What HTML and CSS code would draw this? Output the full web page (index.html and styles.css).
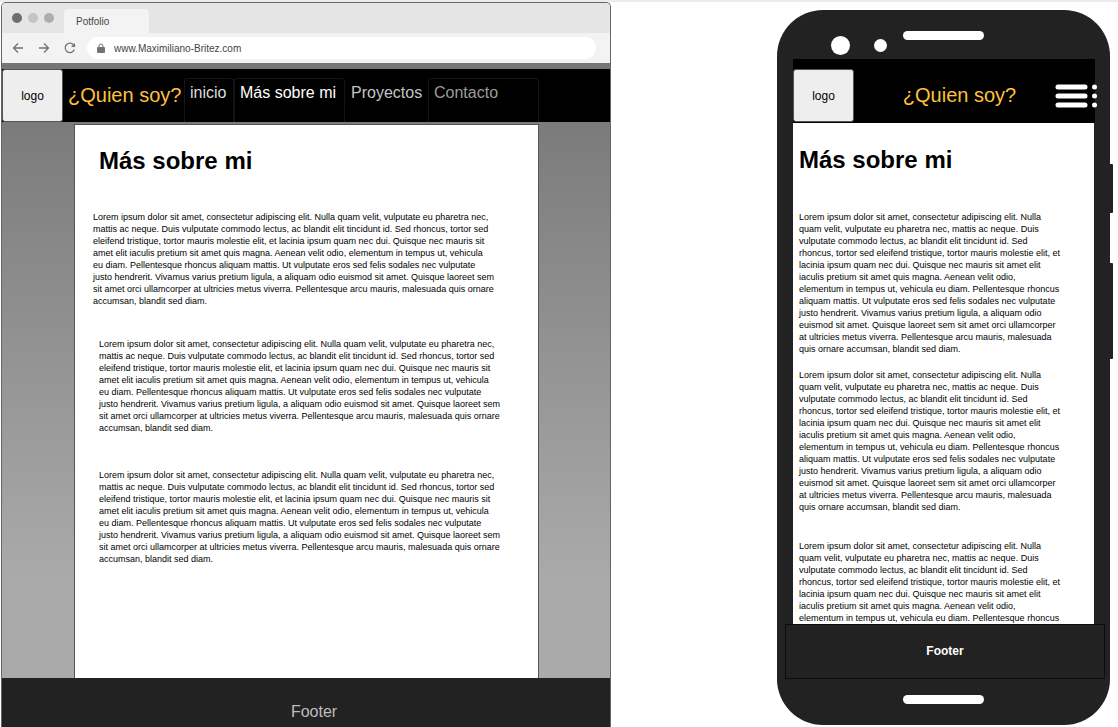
FILE: index.html
```html
<!DOCTYPE html>
<html lang="es">
<head>
<meta charset="utf-8">
<meta name="viewport" content="width=device-width, initial-scale=1">
<title>Potfolio</title>
<link rel="stylesheet" href="styles.css">
</head>
<body>
<div class="board">
  <section class="browser" aria-label="Vista de escritorio">
    <div class="tabstrip">
      <span class="light light-dark"></span>
      <span class="light light-pale"></span>
      <span class="light light-mid"></span>
      <button class="tab" type="button">Potfolio</button>
    </div>
    <div class="toolbar">
      <button class="tool" type="button" aria-label="Atrás"><svg viewBox="0 0 12 12"><path d="M11 6H1.500M6 1.500 1.500 6 6 10.500"/></svg></button>
      <button class="tool" type="button" aria-label="Adelante"><svg viewBox="0 0 12 12"><path d="M1 6h9.500M6 1.500 10.500 6 6 10.500"/></svg></button>
      <button class="tool" type="button" aria-label="Recargar"><svg viewBox="0 0 12 12"><path d="M10.300 7.500A4.700 4.700 0 1 1 9.600 2.900L11 4.500"/><path d="M11 1v4H7z" class="solid"/></svg></button>
      <label class="address">
        <svg class="lock" viewBox="0 0 8 11" aria-hidden="true"><path d="M2 4.500V3a2 2 0 0 1 4 0v1.500" fill="none" stroke="#737373"/><rect y="4" width="8" height="6" rx="1" fill="#737373"/></svg>
        <input type="text" aria-label="Dirección" value="www.Maximiliano-Britez.com">
      </label>
    </div>
    <div class="site">
      <header class="site-header">
        <div class="logo">logo</div>
        <div class="brand">¿Quien soy?</div>
        <nav class="nav">
          <a class="nav-link nav-home" href="#">inicio</a>
          <a class="nav-link nav-about" href="#">Más sobre mi</a>
          <a class="nav-link nav-projects" href="#">Proyectos</a>
          <a class="nav-link nav-contact" href="#">Contacto</a>
        </nav>
      </header>
      <main class="paper">
        <h1 class="heading">Más sobre mi</h1>
        <p class="copy copy-lead">Lorem ipsum dolor sit amet, consectetur adipiscing elit. Nulla quam velit, vulputate eu pharetra nec,<br>
          mattis ac neque. Duis vulputate commodo lectus, ac blandit elit tincidunt id. Sed rhoncus, tortor sed<br>
          eleifend tristique, tortor mauris molestie elit, et lacinia ipsum quam nec dui. Quisque nec mauris sit<br>
          amet elit iaculis pretium sit amet quis magna. Aenean velit odio, elementum in tempus ut, vehicula<br>
          eu diam. Pellentesque rhoncus aliquam mattis. Ut vulputate eros sed felis sodales nec vulputate<br>
          justo hendrerit. Vivamus varius pretium ligula, a aliquam odio euismod sit amet. Quisque laoreet sem<br>
          sit amet orci ullamcorper at ultricies metus viverra. Pellentesque arcu mauris, malesuada quis ornare<br>
          accumsan, blandit sed diam.</p>
        <p class="copy">Lorem ipsum dolor sit amet, consectetur adipiscing elit. Nulla quam velit, vulputate eu pharetra nec,<br>
          mattis ac neque. Duis vulputate commodo lectus, ac blandit elit tincidunt id. Sed rhoncus, tortor sed<br>
          eleifend tristique, tortor mauris molestie elit, et lacinia ipsum quam nec dui. Quisque nec mauris sit<br>
          amet elit iaculis pretium sit amet quis magna. Aenean velit odio, elementum in tempus ut, vehicula<br>
          eu diam. Pellentesque rhoncus aliquam mattis. Ut vulputate eros sed felis sodales nec vulputate<br>
          justo hendrerit. Vivamus varius pretium ligula, a aliquam odio euismod sit amet. Quisque laoreet sem<br>
          sit amet orci ullamcorper at ultricies metus viverra. Pellentesque arcu mauris, malesuada quis ornare<br>
          accumsan, blandit sed diam.</p>
        <p class="copy">Lorem ipsum dolor sit amet, consectetur adipiscing elit. Nulla quam velit, vulputate eu pharetra nec,<br>
          mattis ac neque. Duis vulputate commodo lectus, ac blandit elit tincidunt id. Sed rhoncus, tortor sed<br>
          eleifend tristique, tortor mauris molestie elit, et lacinia ipsum quam nec dui. Quisque nec mauris sit<br>
          amet elit iaculis pretium sit amet quis magna. Aenean velit odio, elementum in tempus ut, vehicula<br>
          eu diam. Pellentesque rhoncus aliquam mattis. Ut vulputate eros sed felis sodales nec vulputate<br>
          justo hendrerit. Vivamus varius pretium ligula, a aliquam odio euismod sit amet. Quisque laoreet sem<br>
          sit amet orci ullamcorper at ultricies metus viverra. Pellentesque arcu mauris, malesuada quis ornare<br>
          accumsan, blandit sed diam.</p>
      </main>
    </div>
    <footer class="site-footer">Footer</footer>
  </section>

  <section class="phone" aria-label="Vista móvil">
    <div class="phone-top">
      <div class="sensors"><span class="camera"></span><span class="sensor"></span></div>
      <span class="pill"></span>
    </div>
    <header class="phone-header">
      <div class="logo">logo</div>
      <div class="brand phone-brand">¿Quien soy?</div>
      <button class="menu" type="button" aria-label="Menú"><svg viewBox="0 0 43 24" aria-hidden="true"><g stroke="#fff" stroke-width="5" stroke-linecap="round"><path d="M3 3h27M3 12h27M3 21h27"/></g><g fill="#fff"><circle cx="39.500" cy="3" r="2.500"/><circle cx="39.500" cy="12" r="2.500"/><circle cx="39.500" cy="21" r="2.500"/></g></svg></button>
    </header>
    <main class="phone-page">
      <h1 class="heading">Más sobre mi</h1>
      <p class="copy">Lorem ipsum dolor sit amet, consectetur adipiscing elit. Nulla<br>
        quam velit, vulputate eu pharetra nec, mattis ac neque. Duis<br>
        vulputate commodo lectus, ac blandit elit tincidunt id. Sed<br>
        rhoncus, tortor sed eleifend tristique, tortor mauris molestie elit, et<br>
        lacinia ipsum quam nec dui. Quisque nec mauris sit amet elit<br>
        iaculis pretium sit amet quis magna. Aenean velit odio,<br>
        elementum in tempus ut, vehicula eu diam. Pellentesque rhoncus<br>
        aliquam mattis. Ut vulputate eros sed felis sodales nec vulputate<br>
        justo hendrerit. Vivamus varius pretium ligula, a aliquam odio<br>
        euismod sit amet. Quisque laoreet sem sit amet orci ullamcorper<br>
        at ultricies metus viverra. Pellentesque arcu mauris, malesuada<br>
        quis ornare accumsan, blandit sed diam.</p>
      <p class="copy">Lorem ipsum dolor sit amet, consectetur adipiscing elit. Nulla<br>
        quam velit, vulputate eu pharetra nec, mattis ac neque. Duis<br>
        vulputate commodo lectus, ac blandit elit tincidunt id. Sed<br>
        rhoncus, tortor sed eleifend tristique, tortor mauris molestie elit, et<br>
        lacinia ipsum quam nec dui. Quisque nec mauris sit amet elit<br>
        iaculis pretium sit amet quis magna. Aenean velit odio,<br>
        elementum in tempus ut, vehicula eu diam. Pellentesque rhoncus<br>
        aliquam mattis. Ut vulputate eros sed felis sodales nec vulputate<br>
        justo hendrerit. Vivamus varius pretium ligula, a aliquam odio<br>
        euismod sit amet. Quisque laoreet sem sit amet orci ullamcorper<br>
        at ultricies metus viverra. Pellentesque arcu mauris, malesuada<br>
        quis ornare accumsan, blandit sed diam.</p>
      <p class="copy copy-last">Lorem ipsum dolor sit amet, consectetur adipiscing elit. Nulla<br>
        quam velit, vulputate eu pharetra nec, mattis ac neque. Duis<br>
        vulputate commodo lectus, ac blandit elit tincidunt id. Sed<br>
        rhoncus, tortor sed eleifend tristique, tortor mauris molestie elit, et<br>
        lacinia ipsum quam nec dui. Quisque nec mauris sit amet elit<br>
        iaculis pretium sit amet quis magna. Aenean velit odio,<br>
        elementum in tempus ut, vehicula eu diam. Pellentesque rhoncus</p>
    </main>
    <footer class="phone-footer">Footer</footer>
    <div class="phone-bottom"><span class="pill"></span></div>
    <span class="side-key key-power"></span>
    <span class="side-key key-volume"></span>
  </section>
</div>
</body>
</html>
```
FILE: styles.css
```css
* { box-sizing: border-box; }

body {
  margin: 0;
  background: #fff;
  color: #000;
  font-family: "Liberation Sans", Arial, sans-serif;
}

button, input { font: inherit; color: inherit; border: 0; padding: 0; background: none; }
h1, p { margin: 0; }
svg { display: block; }

.board {
  display: grid;
  grid-template-columns: minmax(0, 1fr) 333px;
  gap: 166px;
  height: 100vh;
  border-top: 2px solid #ececec;
  padding: 0 8px 0 1px;
}

/* Desktop browser */
.browser {
  display: flex;
  flex-direction: column;
  border: 1px solid #666;
  border-bottom: 0;
  border-radius: 5px 5px 0 0;
  overflow: hidden;
}

.tabstrip {
  display: flex;
  align-items: center;
  gap: 6px;
  height: 30px;
  padding-left: 10px;
  background: #e5e5e5;
}
.light { width: 10px; height: 10px; border-radius: 50%; }
.light-dark { background: #6e6e6e; }
.light-pale { background: #c4c4c4; }
.light-mid { background: #adadad; }
.tab {
  align-self: flex-end;
  width: 85px;
  height: 24px;
  margin-left: 4px;
  padding-left: 12px;
  border-radius: 4px 4px 0 0;
  background: #f3f3f3;
  color: #444;
  font-size: 10px;
  text-align: left;
}

.toolbar {
  display: flex;
  align-items: center;
  gap: 14px;
  height: 30px;
  padding: 0 14px 0 10px;
  background: #f3f3f3;
}
.tool { width: 12px; height: 12px; }
.tool svg { width: 12px; height: 12px; fill: none; stroke: #737373; stroke-width: 1.3; }
.tool .solid { fill: #737373; stroke: none; }
.address {
  display: flex;
  flex: 1;
  align-items: center;
  gap: 9px;
  height: 22px;
  margin-left: -3px;
  padding-left: 10px;
  border-radius: 11px;
  background: #fff;
}
.lock { width: 8px; height: 11px; }
.address input { flex: 1; min-width: 0; color: #444; font-size: 10px; }

.site {
  display: flex;
  flex: 1;
  flex-direction: column;
  min-height: 0;
  padding-top: 6px;
  background: linear-gradient(#757575, #aaa 84%);
}
.site-header {
  display: flex;
  flex: none;
  height: 53px;
  background: #000;
}
.logo {
  display: flex;
  align-items: center;
  justify-content: center;
  width: 61px;
  height: 53px;
  flex: none;
  border: 1px solid #555;
  border-radius: 3px;
  background: #eee;
  font-size: 12px;
}
.brand { color: #ffc03d; font-size: 20px; line-height: 24px; white-space: nowrap; }
.site-header .brand { width: 121px; padding: 14px 0 0 5px; }
.nav { display: flex; padding-top: 9px; }
.nav-link {
  padding: 4px 5px 0;
  border: 1px solid #141414;
  border-bottom: 0;
  border-radius: 3px 3px 0 0;
  font-size: 16px;
  line-height: 20px;
  text-decoration: none;
  white-space: nowrap;
}
.nav-home { width: 50px; color: #dedede; }
.nav-about { width: 111px; color: #fff; }
.nav-projects { width: 83px; border-color: transparent; color: #c4c4c4; }
.nav-contact { width: 111px; color: #9c9c9c; }

.paper {
  flex: 1;
  min-height: 0;
  margin: 2px 71px 0 72px;
  padding: 22px 16px 0 24px;
  border: 1px solid #555;
  border-bottom: 0;
  background: #fff;
}
.heading { font-size: 24px; line-height: 28px; }
.copy { font-size: 9px; line-height: 12px; white-space: nowrap; }
.paper .copy { margin-top: 35px; }
.paper .copy-lead { margin: 36px 6px -4px -6px; }

.site-footer {
  flex: none;
  padding: 24px 0 5px 16px;
  background: #222;
  color: #bdbdbd;
  font-size: 16px;
  line-height: 20px;
  text-align: center;
}

/* Phone */
.phone {
  position: relative;
  display: flex;
  flex-direction: column;
  margin: 8px 0 2px;
  border-radius: 46px;
  background: #222;
}
.phone-top {
  display: grid;
  grid-template-columns: 1fr 81px 1fr;
  height: 49px;
  padding-top: 21px;
  flex: none;
}
.sensors {
  display: flex;
  align-items: center;
  justify-content: flex-end;
  gap: 24px;
  height: 29px;
  padding-right: 16px;
}
.camera { width: 19px; height: 19px; border-radius: 50%; background: #fff; }
.sensor { width: 13px; height: 13px; border-radius: 50%; background: #fff; }
.pill { width: 81px; height: 9px; border-radius: 5px; background: #fff; }

.phone-header {
  display: flex;
  flex: none;
  height: 64px;
  margin: 0 15px 0 16px;
  padding-top: 10px;
  background: #000;
}
.phone-brand { flex: 1; padding: 14px 0 0 10px; text-align: center; }
.menu { width: 43px; height: 24px; margin: 15px -3px 0 0; }
.menu svg { width: 43px; height: 24px; }

.phone-page {
  flex: 1;
  min-height: 0;
  margin: 0 16px;
  padding: 23px 16px 0 6px;
  overflow: hidden;
  background: #fff;
}
.phone-page .copy { margin-top: 14px; }
.phone-page .heading + .copy { margin-top: 37px; }
.phone-page .copy-last { margin-top: 27px; }

.phone-footer {
  flex: none;
  height: 55px;
  margin: 0 5px 0 8px;
  padding-top: 16px;
  border: 1px solid #0c0c0c;
  color: #fff;
  font-size: 12px;
  font-weight: 700;
  line-height: 20px;
  text-align: center;
}
.phone-bottom { display: flex; justify-content: center; flex: none; height: 46px; padding-top: 16px; }
.side-key {
  position: absolute;
  left: 100%;
  width: 3px;
  border-radius: 0 1px 1px 0;
  background: #222;
}
.key-power { top: 154px; height: 49px; }
.key-volume { top: 253px; height: 96px; }
```
